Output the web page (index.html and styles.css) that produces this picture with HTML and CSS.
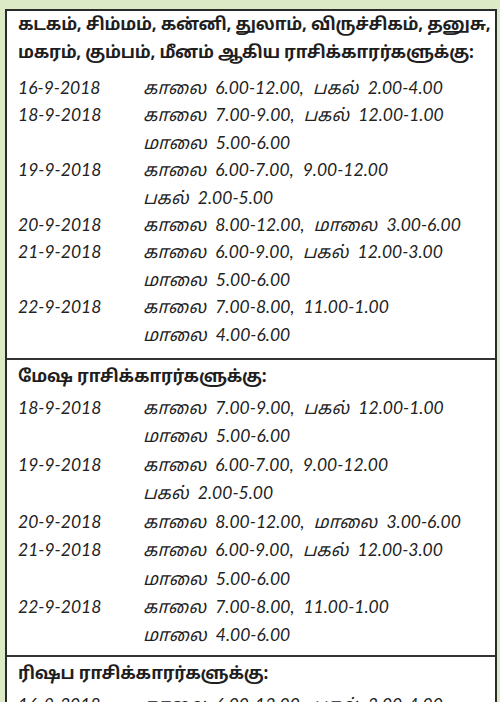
FILE: index.html
```html
<!DOCTYPE html>
<html lang="ta">
<head>
<meta charset="utf-8">
<title>ராசிக்காரர்களுக்கு</title>
<link rel="stylesheet" href="styles.css">
</head>
<body>
<div class="page">
  <div class="box">
    <section class="section">
      <div class="head">
        <span class="just">கடகம், சிம்மம், கன்னி, துலாம், விருச்சிகம், தனுசு,</span>
        <span>மகரம், கும்பம், மீனம் ஆகிய ராசிக்காரர்களுக்கு:</span>
      </div>
      <div class="rows rows-first">
        <div class="entry"><div class="date">16-9-2018</div><div class="times"><div>காலை 6.00-12.00, பகல் 2.00-4.00</div></div></div>
        <div class="entry"><div class="date">18-9-2018</div><div class="times"><div>காலை 7.00-9.00, பகல் 12.00-1.00</div><div>மாலை 5.00-6.00</div></div></div>
        <div class="entry"><div class="date">19-9-2018</div><div class="times"><div>காலை 6.00-7.00, 9.00-12.00</div><div>பகல் 2.00-5.00</div></div></div>
        <div class="entry"><div class="date">20-9-2018</div><div class="times"><div>காலை 8.00-12.00, மாலை 3.00-6.00</div></div></div>
        <div class="entry"><div class="date">21-9-2018</div><div class="times"><div>காலை 6.00-9.00, பகல் 12.00-3.00</div><div>மாலை 5.00-6.00</div></div></div>
        <div class="entry"><div class="date">22-9-2018</div><div class="times"><div>காலை 7.00-8.00, 11.00-1.00</div><div>மாலை 4.00-6.00</div></div></div>
      </div>
    </section>
    <section class="section">
      <div class="head"><span>மேஷ ராசிக்காரர்களுக்கு:</span></div>
      <div class="rows">
        <div class="entry"><div class="date">18-9-2018</div><div class="times"><div>காலை 7.00-9.00, பகல் 12.00-1.00</div><div>மாலை 5.00-6.00</div></div></div>
        <div class="entry"><div class="date">19-9-2018</div><div class="times"><div>காலை 6.00-7.00, 9.00-12.00</div><div>பகல் 2.00-5.00</div></div></div>
        <div class="entry"><div class="date">20-9-2018</div><div class="times"><div>காலை 8.00-12.00, மாலை 3.00-6.00</div></div></div>
        <div class="entry"><div class="date">21-9-2018</div><div class="times"><div>காலை 6.00-9.00, பகல் 12.00-3.00</div><div>மாலை 5.00-6.00</div></div></div>
        <div class="entry"><div class="date">22-9-2018</div><div class="times"><div>காலை 7.00-8.00, 11.00-1.00</div><div>மாலை 4.00-6.00</div></div></div>
      </div>
    </section>
    <section class="section">
      <div class="head"><span>ரிஷப ராசிக்காரர்களுக்கு:</span></div>
      <div class="rows">
        <div class="entry"><div class="date">16-9-2018</div><div class="times"><div>காலை 6.00-12.00, பகல் 2.00-4.00</div></div></div>
      </div>
    </section>
  </div>
</div>
</body>
</html>
```

FILE: styles.css
```css
html, body {
  margin: 0;
  padding: 0;
  background: #dcebc6;
}
.page {
  height: 702px;
  overflow: hidden;
  padding: 9px 3px 0 5px;
  box-sizing: border-box;
  background: #dcebc6;
}
.box {
  background: #ffffff;
  border: 2px solid #2a2a2a;
  border-bottom: none;
  color: #1e1e1e;
}
.section + .section {
  border-top: 2px solid #333333;
}
.head {
  font-family: "Noto Sans Tamil", "Noto Sans", sans-serif;
  font-weight: bold;
  font-size: 17px;
  letter-spacing: -0.2px;
  line-height: 28px;
  white-space: nowrap;
  padding: 1px 8px 4px 11px;
}
.section + .section .head {
  padding-top: 4px;
  padding-bottom: 0;
}
.head span {
  display: block;
}
.head .just {
  text-align: justify;
  text-align-last: justify;
}
.rows {
  padding: 2px 0 5px 11px;
  font-family: Lato, "Noto Sans Tamil", sans-serif;
  font-style: italic;
  font-size: 17.5px;
  line-height: 28.4px;
  color: #222222;
}
.rows-first {
  line-height: 27.4px;
  padding-bottom: 10px;
}
.times {
  word-spacing: 5px;
}
.entry {
  display: grid;
  grid-template-columns: 125px 1fr;
}
```
